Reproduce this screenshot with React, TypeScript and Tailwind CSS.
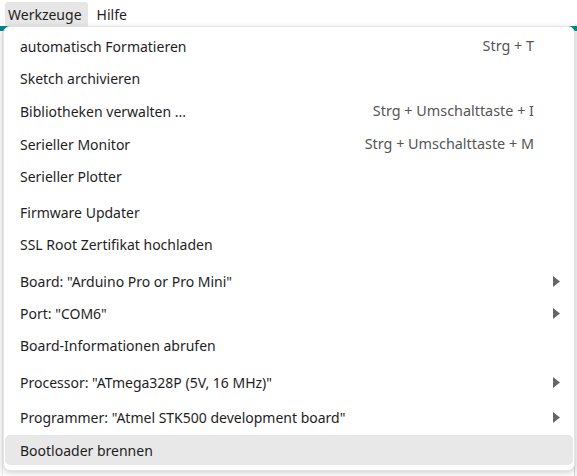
const ITEMS = [
  { label: "automatisch Formatieren", shortcut: "Strg + T", mt: "mt-0" },
  { label: "Sketch archivieren", mt: "mt-[2px]" },
  { label: "Bibliotheken verwalten ...", shortcut: "Strg + Umschalttaste + I", mt: "mt-[3px]" },
  { label: "Serieller Monitor", shortcut: "Strg + Umschalttaste + M", mt: "mt-[3px]" },
  { label: "Serieller Plotter", mt: "mt-[2px]" },
  { label: "Firmware Updater", mt: "mt-[6px]" },
  { label: "SSL Root Zertifikat hochladen", mt: "mt-[2px]" },
  { label: 'Board: "Arduino Pro or Pro Mini"', sub: true, mt: "mt-[7px]" },
  { label: 'Port: "COM6"', sub: true, mt: "mt-[2px]" },
  { label: "Board-Informationen abrufen", mt: "mt-[2px]" },
  { label: 'Processor: "ATmega328P (5V, 16 MHz)"', sub: true, mt: "mt-[7px]" },
  { label: 'Programmer: "Atmel STK500 development board"', sub: true, mt: "mt-[5px]" },
  { label: "Bootloader brennen", active: true, mt: "mt-[3px]" },
];

function Arrow() {
  return (
    <svg width="7" height="11" viewBox="0 0 7 11" className="fill-[#666666]">
      <path d="M0 0 L7 5.5 L0 11 Z" />
    </svg>
  );
}

export default function App() {
  return (
    <div
      className="relative h-[476px] w-[577px] overflow-hidden bg-white text-[#1e1e1e]"
      style={{ fontFamily: '"Noto Sans", "Open Sans", sans-serif' }}
    >
      {/* menu bar */}
      <div className="flex h-[26px] items-end bg-white text-[14px]">
        <div className="ml-[5px] flex h-[24px] items-center rounded-t-[3px] bg-[#e6e6e6] pl-[3px] pr-[6px]">
          Werkzeuge
        </div>
        <div className="flex h-[24px] items-center pl-[9px]">Hilfe</div>
      </div>
      {/* app behind the menu */}
      <div className="h-[5px] bg-[#00878f]" />
      <div className="flex h-full">
        <div className="w-[3px] border-r border-[#ececec] bg-[#fafafa]" />
        <div className="flex-1" />
        <div className="w-[3px] border-l border-[#d8d8d8] bg-[#f4f4f4]" />
      </div>

      {/* dropdown */}
      <div className="absolute left-[3px] top-[26px] w-[572px] rounded-[7px] border border-[#e4e4e4] bg-white px-[1px] pb-[5px] pt-[4px] shadow-[0_2px_6px_rgba(0,0,0,0.18)]">
        {ITEMS.map((it) => (
          <div
            key={it.label}
            className={`${it.mt} flex h-[30px] items-center rounded-[5px] pl-[15px] pr-[13px] text-[14px] ${
              it.active ? "bg-[#e8e8e8]" : ""
            }`}
          >
            <span className="flex-1 whitespace-nowrap">{it.label}</span>
            {it.shortcut && (
              <span className="whitespace-nowrap text-[14.4px] text-[#555555]">{it.shortcut}</span>
            )}
            <span className="flex w-[26px] justify-end">{it.sub && <Arrow />}</span>
          </div>
        ))}
      </div>
    </div>
  );
}
